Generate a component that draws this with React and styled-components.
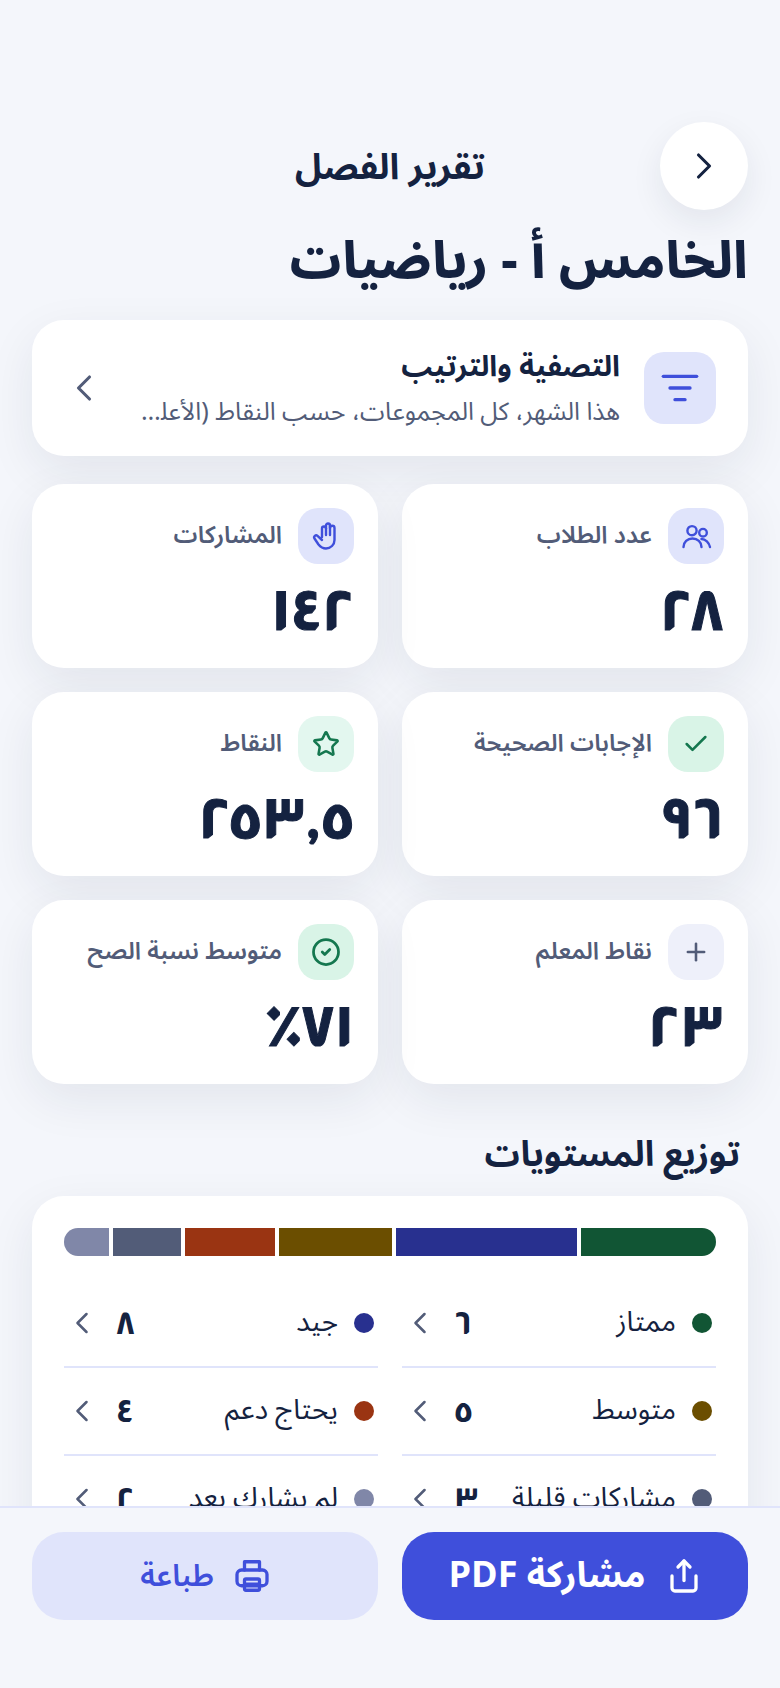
import React from 'react';
import styled, { createGlobalStyle } from 'styled-components';
import { ChevronLeft, ChevronRight, Check, ListFilter, Plus, Share, Star, CircleCheck } from 'lucide-react';

const Ink = '#142240';
const Muted = '#525c78';
const Primary = '#3f4fdb';
const Pale = '#e0e4fb';

const GlobalStyle = createGlobalStyle`
    html, body { margin: 0; padding: 0; background: #f4f6fb; }
    * { box-sizing: border-box; }
    body { font-family: "Noto Sans Arabic", "Inter", "Noto Sans", sans-serif; color: ${Ink}; }
`;

const Screen = styled.div`
    width: 780px;
    height: 1688px;
    display: flex;
    flex-direction: column;
    overflow: hidden;
    background: #f4f6fb;
`;

const Scroll = styled.main`
    flex: 1;
    min-height: 0;
    overflow: hidden;
    padding: 122px 32px 0;
`;

const Header = styled.header`
    display: grid;
    grid-template-columns: 88px 1fr 88px;
    align-items: center;
`;

const BackButton = styled.button`
    width: 88px;
    height: 88px;
    padding: 0;
    border: 0;
    border-radius: 50%;
    background: #fff;
    color: ${Ink};
    display: flex;
    align-items: center;
    justify-content: center;
    box-shadow: 0 12px 32px rgba(20, 34, 64, 0.08);
`;

const HeaderTitle = styled.div`
    padding-top: 4px;
    text-align: center;
    font-size: 36px;
    line-height: 48px;
    font-weight: 700;
`;

const PageTitle = styled.h1`
    margin: 18px 0 24px;
    font-size: 51px;
    line-height: 68px;
    font-weight: 800;
`;

const Card = styled.section`
    background: #fff;
    border-radius: 32px;
    box-shadow: 0 16px 48px rgba(20, 34, 64, 0.08);
`;

const FilterCard = styled(Card)`
    height: 136px;
    padding: 32px 32px 32px 30px;
    display: flex;
    align-items: center;
    gap: 24px;
    color: ${Muted};
`;

const IconTile = styled.div`
    flex: none;
    width: ${(p) => p.$size || 56}px;
    height: ${(p) => p.$size || 56}px;
    border-radius: 20px;
    background: ${(p) => p.$bg || Pale};
    color: ${(p) => p.$fg || Primary};
    display: flex;
    align-items: center;
    justify-content: center;
`;

const FilterText = styled.div`
    flex: 1;
    min-width: 0;
    padding-top: 2px;
`;

const FilterTitle = styled.div`
    font-size: 29px;
    line-height: 44px;
    font-weight: 700;
    color: ${Ink};
`;

const FilterSub = styled.div`
    margin-top: 2px;
    font-size: 25px;
    line-height: 42px;
    color: ${Muted};
    white-space: nowrap;
    overflow: hidden;
    text-overflow: ellipsis;
`;

const StatGrid = styled.div`
    display: grid;
    grid-template-columns: 1fr 1fr;
    gap: 24px;
    margin-top: 28px;
`;

const StatCard = styled(Card)`
    height: 184px;
    padding: 24px;
`;

const StatHead = styled.div`
    display: flex;
    align-items: center;
    gap: 16px;
`;

const StatLabel = styled.div`
    font-size: 24px;
    line-height: 36px;
    font-weight: 600;
    color: ${Muted};
    white-space: nowrap;
`;

const StatValue = styled.div`
    margin-top: 11px;
    font-family: "Almarai", "Noto Sans Arabic", sans-serif;
    font-size: 57px;
    line-height: 70px;
    font-weight: 800;
    -webkit-text-stroke: 1px ${Ink};
    color: ${Ink};
`;

const SectionTitle = styled.h2`
    margin: 44px 8px 14px;
    font-size: 35px;
    line-height: 54px;
    font-weight: 700;
`;

const LevelCard = styled(Card)`
    padding: 32px;
`;

const Bar = styled.div`
    display: flex;
    gap: 4px;
    height: 28px;
    border-radius: 14px;
    overflow: hidden;
`;

const Segment = styled.div`
    flex: ${(p) => p.$count};
    background: ${(p) => p.$color};
`;

const Legend = styled.div`
    display: grid;
    grid-template-columns: minmax(0, 1fr) minmax(0, 1fr);
    column-gap: 24px;
    margin-top: 24px;
`;

const LegendRow = styled.div`
    height: 88px;
    display: flex;
    align-items: center;
    gap: 16px;
    border-bottom: 2px solid ${Pale};
    color: ${Muted};
    padding: 0 4px 0 0;
`;

const Dot = styled.span`
    flex: none;
    width: 20px;
    height: 20px;
    border-radius: 50%;
    background: ${(p) => p.$color};
`;

const LegendLabel = styled.span`
    flex: 1;
    font-size: 28px;
    line-height: 42px;
    color: ${Ink};
    white-space: nowrap;
`;

const LegendCount = styled.span`
    font-family: "Almarai", "Noto Sans Arabic", sans-serif;
    font-size: 32px;
    line-height: 42px;
    font-weight: 800;
    color: ${Ink};
`;

const Footer = styled.footer`
    flex: none;
    height: 182px;
    border-top: 2px solid ${Pale};
    background: #f4f6fb;
    padding: 24px 32px 0;
    display: grid;
    grid-template-columns: 1fr 1fr;
    gap: 24px;
`;

const ActionButton = styled.button`
    height: 88px;
    border: 0;
    border-radius: 32px;
    font: inherit;
    font-size: ${(p) => (p.$primary ? 36 : 30)}px;
    font-weight: ${(p) => (p.$primary ? 700 : 600)};
    background: ${(p) => (p.$primary ? Primary : Pale)};
    color: ${(p) => (p.$primary ? '#fff' : Primary)};
    display: flex;
    align-items: center;
    justify-content: center;
    gap: 20px;
`;

const UsersIcon = () => (
    <svg width="32" height="32" viewBox="0 0 32 32" fill="none" stroke="currentColor" strokeWidth="2.4" strokeLinecap="round">
        <circle cx="12" cy="10.7" r="4.6" />
        <circle cx="23" cy="12.7" r="3.8" />
        <path d="M3.5 27c0-5 4-8.5 9-8.5s9 3.500 9 8.500" />
        <path d="M21.500 19c4 0 7.500 3.500 8.500 8" />
    </svg>
);

const HandIcon = () => (
    <svg width="32" height="32" viewBox="0 0 32 32" fill="none" stroke="currentColor" strokeWidth="2.4" strokeLinecap="round" strokeLinejoin="round">
        <path d="M12 17V8.500a2 2 0 0 1 4 0V5.500a2 2 0 0 1 4 0V8a2.200 2.200 0 0 1 4.500 0V20a8.500 8.500 0 0 1-8.500 8.500c-3.500 0-5.500-1.500-7.500-4L4.500 18.500a2 2 0 0 1 3-2.600L12 20" />
        <path d="M16 8.500V15" />
        <path d="M20 5.500V15" />
    </svg>
);

const PrinterIcon = () => (
    <svg width="36" height="36" viewBox="0 0 24 24" fill="none" stroke="currentColor" strokeWidth="2.2" strokeLinecap="round" strokeLinejoin="round">
        <path d="M7 8V2.500h10V8" />
        <rect x="2" y="8" width="20" height="10.500" rx="3" />
        <rect x="7" y="14" width="10" height="7.500" rx="1" />
        <path d="M7 17.500h10" />
    </svg>
);

const stats = [
    { label: 'عدد الطلاب', value: '٢٨', icon: <UsersIcon /> },
    { label: 'المشاركات', value: '١٤٢', icon: <HandIcon /> },
    { label: 'الإجابات الصحيحة', value: '٩٦', icon: <Check size={28} strokeWidth={2.2} />, bg: '#d9f4e7', fg: '#14774f' },
    { label: 'النقاط', value: '٢٥٣,٥', icon: <Star size={28} strokeWidth={2.2} />, bg: '#e3f7ef', fg: '#14774f' },
    { label: 'نقاط المعلم', value: '٢٣', icon: <Plus size={28} strokeWidth={2.2} />, bg: '#eef0fa', fg: Muted },
    { label: 'متوسط نسبة الصح', value: '٧١٪', icon: <CircleCheck size={30} strokeWidth={2.2} />, bg: '#d9f4e7', fg: '#14774f' },
];

const levels = [
    { label: 'ممتاز', count: 6, value: '٦', color: '#115534' },
    { label: 'جيد', count: 8, value: '٨', color: '#28308f' },
    { label: 'متوسط', count: 5, value: '٥', color: '#6b4e00' },
    { label: 'يحتاج دعم', count: 4, value: '٤', color: '#9a3412' },
    { label: 'مشاركات قليلة', count: 3, value: '٣', color: '#525c78' },
    { label: 'لم يشارك بعد', count: 2, value: '٢', color: '#8087a8' },
];

const App = () => (
    <Screen dir="rtl" lang="ar">
        <GlobalStyle />
        <Scroll>
            <Header>
                <BackButton>
                    <ChevronRight size={44} strokeWidth={1.7} />
                </BackButton>
                <HeaderTitle>تقرير الفصل</HeaderTitle>
            </Header>
            <PageTitle>الخامس أ - رياضيات</PageTitle>
            <FilterCard>
                <IconTile $size={72}>
                    <ListFilter size={40} strokeWidth={2} />
                </IconTile>
                <FilterText>
                    <FilterTitle>التصفية والترتيب</FilterTitle>
                    <FilterSub>هذا الشهر، كل المجموعات، حسب النقاط (الأعلى أولاً)</FilterSub>
                </FilterText>
                <ChevronLeft size={44} strokeWidth={1.7} />
            </FilterCard>
            <StatGrid>
                {stats.map(({ label, value, icon, bg, fg }) => (
                    <StatCard key={label}>
                        <StatHead>
                            <IconTile $bg={bg} $fg={fg}>
                                {icon}
                            </IconTile>
                            <StatLabel>{label}</StatLabel>
                        </StatHead>
                        <StatValue>{value}</StatValue>
                    </StatCard>
                ))}
            </StatGrid>
            <SectionTitle>توزيع المستويات</SectionTitle>
            <LevelCard>
                <Bar>
                    {levels.map((l) => (
                        <Segment key={l.label} $count={l.count} $color={l.color} />
                    ))}
                </Bar>
                <Legend>
                    {levels.map((l) => (
                        <LegendRow key={l.label}>
                            <Dot $color={l.color} />
                            <LegendLabel>{l.label}</LegendLabel>
                            <LegendCount>{l.value}</LegendCount>
                            <ChevronLeft size={36} strokeWidth={1.7} />
                        </LegendRow>
                    ))}
                </Legend>
            </LevelCard>
        </Scroll>
        <Footer>
            <ActionButton $primary>
                <Share size={36} strokeWidth={2.2} />
                مشاركة PDF
            </ActionButton>
            <ActionButton>
                <PrinterIcon />
                طباعة
            </ActionButton>
        </Footer>
    </Screen>
);

export default App;
